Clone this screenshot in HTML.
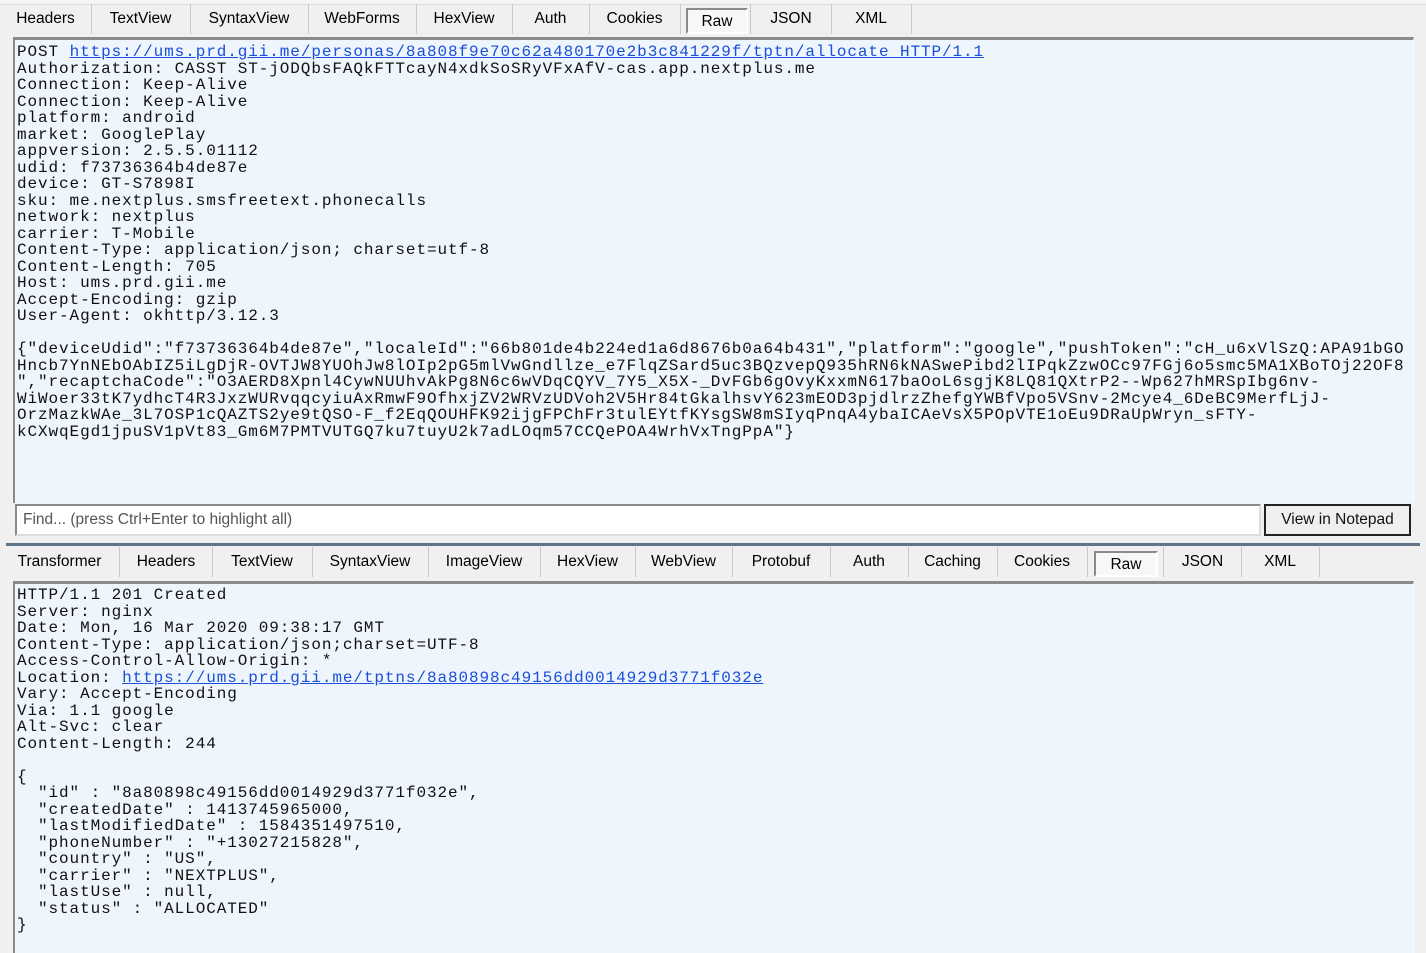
<!DOCTYPE html>
<html><head><meta charset="utf-8">
<style>
html,body{margin:0;width:1426px;height:953px;overflow:hidden;}
body{background:#f0f0f0;position:relative;font-family:"Liberation Sans",sans-serif;}
.tabs{position:absolute;left:0;height:30px;font-size:15.5px;color:#000;}
.tab{position:absolute;top:0;height:30px;line-height:30px;text-align:center;border-right:1px solid #c8c8c8;}
.tab.sel{background:#f7f7f7;border:2px solid #8a8a8a;border-right-color:#fff;border-bottom-color:#fff;height:22px;line-height:24px;top:4px;}
.box{position:absolute;background:#eef5fd;border-top:3px solid #8a8a8a;border-left:2px solid #8a8a8a;border-right:1px solid #fff;}
pre{margin:0;position:absolute;font-family:"Liberation Mono",monospace;font-size:16px;letter-spacing:0.91px;line-height:16.5px;color:#111;}
a{color:#1a4fd8;text-decoration:underline;}
</style></head><body>
<div style="position:absolute;left:0;top:0;width:1426px;height:4px;border-bottom:1px solid #ddd;background:#f4f4f4"></div>
<div class="tabs" style="top:4px;width:1426px">
<div class="tab" style="left:0;width:91px">Headers</div>
<div class="tab" style="left:91px;width:99px">TextView</div>
<div class="tab" style="left:190px;width:118px">SyntaxView</div>
<div class="tab" style="left:308px;width:108px">WebForms</div>
<div class="tab" style="left:416px;width:96px">HexView</div>
<div class="tab" style="left:512px;width:77px">Auth</div>
<div class="tab" style="left:589px;width:91px">Cookies</div>
<div class="tab sel" style="left:686px;width:58px">Raw</div>
<div class="tab" style="left:750px;width:80px;border-left:1px solid #c8c8c8">JSON</div>
<div class="tab" style="left:831px;width:80px">XML</div>
</div>
<div class="box" style="left:13px;top:37px;width:1398px;height:463px"></div>
<pre style="left:17px;top:44px">POST <a>https://ums.prd.gii.me/personas/8a808f9e70c62a480170e2b3c841229f/tptn/allocate HTTP/1.1</a>
Authorization: CASST ST-jODQbsFAQkFTTcayN4xdkSoSRyVFxAfV-cas.app.nextplus.me
Connection: Keep-Alive
Connection: Keep-Alive
platform: android
market: GooglePlay
appversion: 2.5.5.01112
udid: f73736364b4de87e
device: GT-S7898I
sku: me.nextplus.smsfreetext.phonecalls
network: nextplus
carrier: T-Mobile
Content-Type: application/json; charset=utf-8
Content-Length: 705
Host: ums.prd.gii.me
Accept-Encoding: gzip
User-Agent: okhttp/3.12.3

{"deviceUdid":"f73736364b4de87e","localeId":"66b801de4b224ed1a6d8676b0a64b431","platform":"google","pushToken":"cH_u6xVlSzQ:APA91bGO
Hncb7YnNEbOAbIZ5iLgDjR-OVTJW8YUOhJw8lOIp2pG5mlVwGndllze_e7FlqZSard5uc3BQzvepQ935hRN6kNASwePibd2lIPqkZzwOCc97FGj6o5smc5MA1XBoTOj22OF8
","recaptchaCode":"O3AERD8Xpnl4CywNUUhvAkPg8N6c6wVDqCQYV_7Y5_X5X-_DvFGb6gOvyKxxmN617baOoL6sgjK8LQ81QXtrP2--Wp627hMRSpIbg6nv-
WiWoer33tK7ydhcT4R3JxzWURvqqcyiuAxRmwF9OfhxjZV2WRVzUDVoh2V5Hr84tGkalhsvY623mEOD3pjdlrzZhefgYWBfVpo5VSnv-2Mcye4_6DeBC9MerfLjJ-
OrzMazkWAe_3L7OSP1cQAZTS2ye9tQSO-F_f2EqQOUHFK92ijgFPChFr3tulEYtfKYsgSW8mSIyqPnqA4ybaICAeVsX5POpVTE1oEu9DRaUpWryn_sFTY-
kCXwqEgd1jpuSV1pVt83_Gm6M7PMTVUTGQ7ku7tuyU2k7adLOqm57CCQePOA4WrhVxTngPpA"}</pre>
<div style="position:absolute;left:15px;top:504px;height:28px;background:#fff;border:2px solid #8a8a8a;border-right-color:#ddd;border-bottom-color:#ddd;font-size:15.5px;line-height:28px;color:#555;padding-left:6px;width:1236px">Find... (press Ctrl+Enter to highlight all)</div>
<div style="position:absolute;left:1264px;top:504px;width:143px;height:28px;background:#efefef;border:2px solid #222;font-size:15.5px;line-height:28px;text-align:center;color:#111">View in Notepad</div>
<div style="position:absolute;left:6px;top:543px;width:1414px;height:3px;background:#607488"></div>
<div class="tabs" style="top:547px;width:1426px">
<div class="tab" style="left:0;width:119px">Transformer</div>
<div class="tab" style="left:120px;width:92px">Headers</div>
<div class="tab" style="left:212px;width:100px">TextView</div>
<div class="tab" style="left:312px;width:116px">SyntaxView</div>
<div class="tab" style="left:428px;width:112px">ImageView</div>
<div class="tab" style="left:540px;width:95px">HexView</div>
<div class="tab" style="left:635px;width:97px">WebView</div>
<div class="tab" style="left:732px;width:98px">Protobuf</div>
<div class="tab" style="left:830px;width:78px">Auth</div>
<div class="tab" style="left:908px;width:89px">Caching</div>
<div class="tab" style="left:997px;width:90px">Cookies</div>
<div class="tab sel" style="left:1094px;width:60px">Raw</div>
<div class="tab" style="left:1163px;width:77px;border-left:1px solid #c8c8c8">JSON</div>
<div class="tab" style="left:1241px;width:78px">XML</div>
</div>
<div class="box" style="left:13px;top:581px;width:1398px;height:372px"></div>
<pre style="left:17px;top:587px">HTTP/1.1 201 Created
Server: nginx
Date: Mon, 16 Mar 2020 09:38:17 GMT
Content-Type: application/json;charset=UTF-8
Access-Control-Allow-Origin: *
Location: <a>https://ums.prd.gii.me/tptns/8a80898c49156dd0014929d3771f032e</a>
Vary: Accept-Encoding
Via: 1.1 google
Alt-Svc: clear
Content-Length: 244

{
  "id" : "8a80898c49156dd0014929d3771f032e",
  "createdDate" : 1413745965000,
  "lastModifiedDate" : 1584351497510,
  "phoneNumber" : "+13027215828",
  "country" : "US",
  "carrier" : "NEXTPLUS",
  "lastUse" : null,
  "status" : "ALLOCATED"
}</pre>
</body></html>
